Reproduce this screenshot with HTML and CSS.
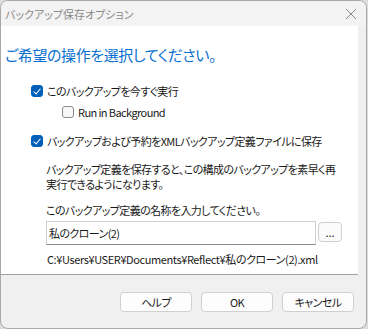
FILE: index.html
```html
<!DOCTYPE html>
<html lang="ja">
<head>
  <meta charset="UTF-8" />
  <title>バックアップ保存オプション</title>
  <link rel="stylesheet" href="styles.css">
</head>
<body>
  <div class="window">
    <div class="titlebar">
      <span class="title">バックアップ保存オプション</span>
      <svg class="close" width="12" height="12" viewBox="0 0 12 12">
        <path d="M1 1 L11 11 M11 1 L1 11" stroke="#8a8a8a" stroke-width="1" fill="none" />
      </svg>
    </div>

    <div class="panel">
      <h1>ご希望の操作を選択してください。</h1>

      <label class="check first">
        <span class="box checked"></span>
        このバックアップを今すぐ実行
      </label>
      <label class="check sub">
        <span class="box"></span>
        Run in Background
      </label>
      <label class="check gap">
        <span class="box checked"></span>
        バックアップおよび予約をXMLバックアップ定義ファイルに保存
      </label>

      <div class="details">
        <p class="desc">バックアップ定義を保存すると、この構成のバックアップを素早く再<br>実行できるようになります。</p>
        <p class="prompt">このバックアップ定義の名称を入力してください。</p>
        <div class="name-row">
          <div class="name-input">私のクローン(2)</div>
          <button class="browse">...</button>
        </div>
        <p class="path">C:¥Users¥USER¥Documents¥Reflect¥私のクローン(2).xml</p>
      </div>
    </div>

    <div class="footer">
      <button class="btn">ヘルプ</button>
      <button class="btn">OK</button>
      <button class="btn">キャンセル</button>
    </div>
  </div>
</body>
</html>
```

FILE: styles.css
```css
body {
  margin: 0;
  background-color: #dcdcdc;
  font-family: 'Noto Sans CJK JP', 'Noto Sans', sans-serif;
  font-feature-settings: "palt";
  font-size: 11px;
  letter-spacing: -0.6px;
  color: #1a1a1a;
}
.window {
  width: 365px;
  height: 327px;
  background-color: #f0f0f0;
  border: 1px solid #a8a8a8;
  border-radius: 8px;
  overflow: hidden;
}
.titlebar {
  height: 25px;
  background-color: #f3f3f3;
  display: flex;
  align-items: center;
  justify-content: space-between;
  padding: 0 5px 0 4px;
}
.title {
  color: #8a8a8a;
  font-size: 11px;
  letter-spacing: 0;
}
.close {
  margin-right: 4px;
}
.panel {
  width: 357px;
  height: 249px;
  background: white;
  border-bottom: 1px solid #a0a0a0;
  box-sizing: border-box;
  padding-top: 18px;
}
h1 {
  margin: 0 0 0 4px;
  font-size: 15px;
  font-weight: normal;
  letter-spacing: -0.4px;
  color: #0a6fcf;
  line-height: 22px;
}
.check {
  display: flex;
  align-items: center;
  gap: 4px;
  margin: 18px 0 0 30px;
  line-height: 14px;
}
.check.sub {
  margin: 7px 0 0 61px;
}
.check.gap {
  margin-top: 15px;
}
.box {
  width: 10px;
  height: 10px;
  border: 1px solid #8a8a8a;
  border-radius: 3px;
  background: #f7f7f7;
  flex: none;
}
.box.checked {
  background: #005fb8;
  border-color: #005fb8;
  position: relative;
}
.box.checked::after {
  content: "";
  position: absolute;
  left: 3px;
  top: 1px;
  width: 3px;
  height: 6px;
  border-right: 1.3px solid white;
  border-bottom: 1.3px solid white;
  transform: rotate(40deg);
}
.details {
  margin-left: 45px;
  margin-top: 14px;
}
.desc {
  margin: 0;
  line-height: 15px;
}
.prompt {
  margin: 11px 0 0;
  line-height: 14px;
}
.name-row {
  display: flex;
  align-items: flex-start;
  gap: 2px;
  margin-top: 4px;
}
.name-input {
  width: 270px;
  height: 24px;
  box-sizing: border-box;
  border: 1px solid #d0d0d0;
  border-bottom-color: #8a8a8a;
  padding: 4px 2px;
  line-height: 14px;
}
.browse {
  width: 24px;
  height: 20px;
  margin-top: 1px;
  padding: 0;
  border: 1px solid #d0d0d0;
  border-radius: 4px;
  background: #fbfbfb;
  font-family: inherit;
  font-size: 11px;
  line-height: 14px;
  color: #1a1a1a;
}
.path {
  margin: 7px 0 0 1px;
  line-height: 14px;
  letter-spacing: -0.4px;
}
.footer {
  display: flex;
  justify-content: flex-end;
  gap: 9px;
  padding: 17px 12px 0 0;
}
.btn {
  width: 72px;
  height: 20px;
  padding: 0;
  border: 1px solid #d0d0d0;
  border-radius: 4px;
  background: #fdfdfd;
  font-family: inherit;
  font-feature-settings: "palt";
  font-size: 11px;
  letter-spacing: -0.6px;
  color: #1a1a1a;
}
```
